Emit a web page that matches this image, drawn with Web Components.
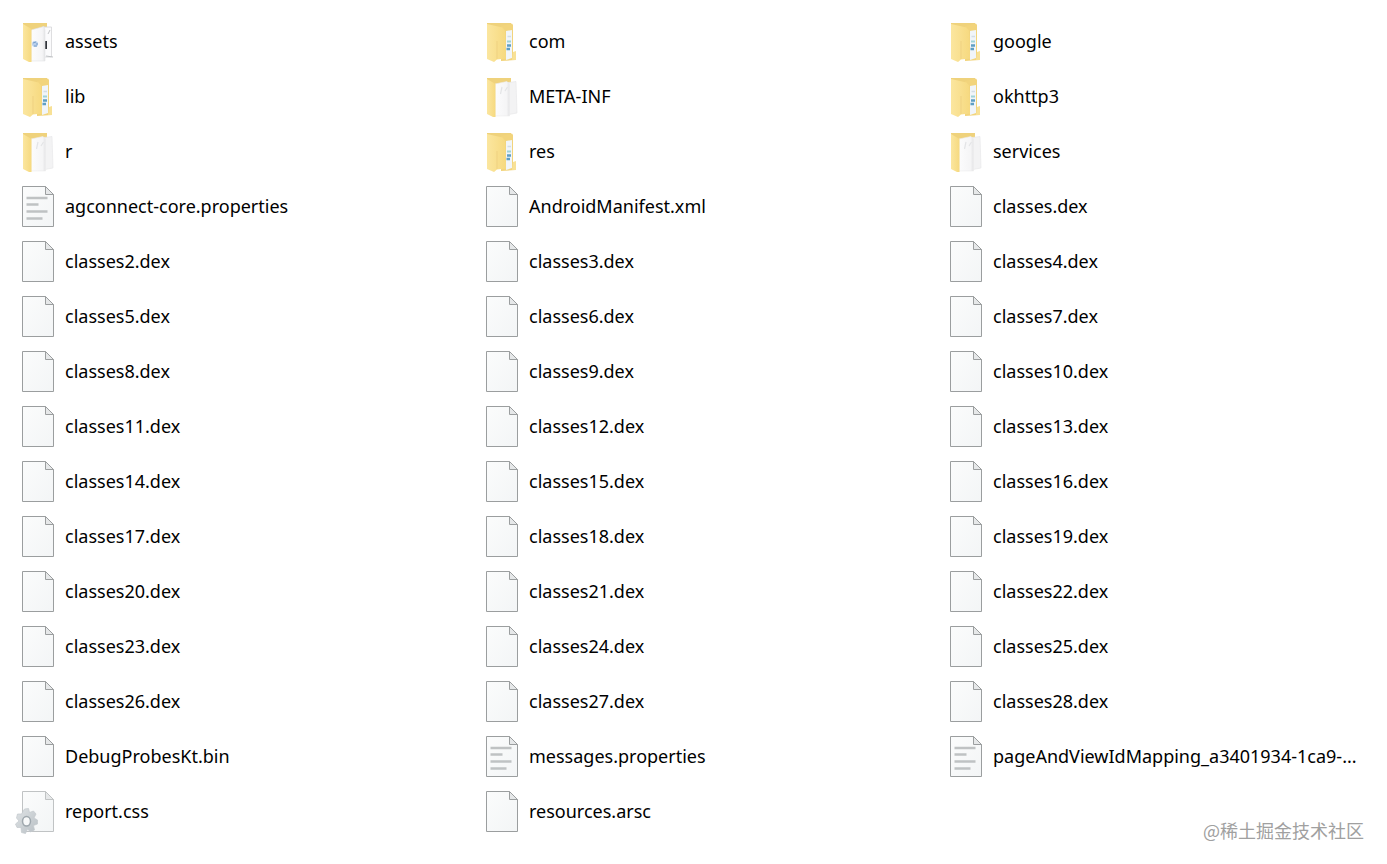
<!DOCTYPE html>
<html lang="en">
<head>
<meta charset="utf-8">
<title>Files</title>
<style>
body { margin: 0; background: #fff; color: #000; font-family: "Noto Sans", "Noto Sans CJK SC", sans-serif; }
</style>
</head>
<body>
<file-browser></file-browser>
<script>
const gradients = `
  <defs>
    <linearGradient id="p" x1="0" y1="0" x2="1" y2="1"><stop offset="0" stop-color="#fbfcfc"/><stop offset="1" stop-color="#f3f5f6"/></linearGradient>
    <linearGradient id="f" x1="0" y1="0" x2="1" y2="0"><stop offset="0" stop-color="#fbe69f"/><stop offset="1" stop-color="#f6d97f"/></linearGradient>
    <linearGradient id="w" x1="0" y1="0" x2="1" y2="0"><stop offset="0" stop-color="#fcfcfd"/><stop offset=".8" stop-color="#f5f5f6"/><stop offset="1" stop-color="#e4e4e6"/></linearGradient>
    <linearGradient id="g" x1="0" y1="0" x2="1" y2="1"><stop offset="0" stop-color="#dfe3e5"/><stop offset="1" stop-color="#b9c0c5"/></linearGradient>
  </defs>`;

const page = (stroke) => `
  <path d="M.5 .5H23.5L31.5 8.5V40.5H.5Z" fill="url(#p)" stroke="${stroke}"/>
  <path d="M23.5 .5V8.5H31.5Z" fill="#e6e8e9" stroke="${stroke}"/>`;

const folderBack = `
  <path d="M1 2H25V10H1Z" fill="#efd27c"/>`;

const folderCover = `
  <path d="M1 3L9.500 8V41L7 41L1 38Z" fill="url(#f)"/>`;

const ICONS = {
  file: page('#9b9e9f'),
  text: page('#9b9e9f') + `
  <path d="M4.500 12H25.500M4.500 18.500H16.500M4.500 25.500H25.500M4.500 32.500H20.500" stroke="#bfc2c3" stroke-width="2.600" fill="none"/>`,
  config: page('#c0c3c4') + `
  <g transform="translate(4.500 30)">
    <path fill-rule="evenodd" d="M-2 -12L2 -12.500L3 -8.500L7 -10L9.500 -7L7.500 -3L11 -1L11 3L7 4.500L8 9L4 11L1 8L-1 12.500L-5 11.500L-5.500 6.500L-9.500 6.500L-11 3L-7.500 0L-10 -3L-9 -7L-5 -7ZM0 -4.500A4 4.800 0 1 0 .1 -4.500Z" fill="url(#g)" stroke="#c3c9cd" stroke-width=".7"/>
    <ellipse cx="0" cy=".3" rx="4" ry="4.800" fill="none" stroke="#9fa8ae" stroke-width="1.500"/>
  </g>`,
  folder: folderBack + `
  <path d="M15 5L26 2.500L27 4V31H30V39L15 40Z" fill="#f2d47c"/>
  <path d="M20 10L26 9V37L20 39Z" fill="#f1f5f9"/>
  <path d="M21.500 15.500H25" stroke="#d3dde6" stroke-width="1.500"/>
  <path d="M21 20.500H25" stroke="#9fd3d8" stroke-width="2"/>
  <path d="M21 24.500H25M20.500 28H24" stroke="#5f9fc4" stroke-width="2.500"/>
  <path d="M27 31L30 30V39H26Z" fill="#f8e196"/>
  <path d="M10 6.500L19 9.500L20 37.500L10 38Z" fill="#f4d883"/>
  <path d="M1 3L16.500 6.500L19 9.500L20 37.500L11 38.500L8 41L1 38Z" fill="url(#f)"/>
  <path d="M11 20V38" stroke="#efd180" stroke-width="1"/>`,
  papers: folderBack + `
  <path d="M18 7L30 5.500L31 37L20 39Z" fill="#f3f3f4" stroke="#e6e6e7" stroke-width=".6"/>
  <path d="M9 8L21 5.500L23.500 8V40L9 40Z" fill="url(#w)" stroke="#ececed" stroke-width=".6"/>
  <path d="M21.500 11L19 15M16 11L14.500 18" stroke="#e3e4e6" stroke-width="1.200"/>` + folderCover,
  assets: folderBack + `
  <path d="M20 6H29.500V36H22Z" fill="#fbfbfc" stroke="#d5d6d8" stroke-width=".8"/>
  <path d="M28 9L26 13M24 35L31 36" stroke="#c2c4c6" stroke-width="1"/>
  <path d="M22 20H25V28H22Z" fill="#30343a"/>
  <path d="M9 9L22 5.500L23 9V40H9Z" fill="url(#w)" stroke="#e3e4e6" stroke-width=".6"/>
  <circle cx="13" cy="23" r="3" fill="#b9d0ec"/>
  <path d="M11 22L14 21M12 25H15M14 23H16" stroke="#789fcb" stroke-width="1"/>` + folderCover
};

class FileIcon extends HTMLElement {
  connectedCallback() {
    this.attachShadow({ mode: 'open' }).innerHTML = `
      <style>:host { display: block; flex: none; } svg { display: block; overflow: visible; }</style>
      <svg width="32" height="41" viewBox="0 0 32 41" aria-hidden="true">${gradients}${ICONS[this.getAttribute('kind')]}</svg>`;
  }
}

class FileItem extends HTMLElement {
  connectedCallback() {
    this.attachShadow({ mode: 'open' }).innerHTML = `
      <style>
        :host { display: flex; align-items: center; gap: 11px; height: 55px; min-width: 0; font-size: 18px; line-height: 24px; }
        span { white-space: nowrap; padding-bottom: 2px; }
      </style>
      <file-icon kind="${this.getAttribute('kind')}"></file-icon>
      <span><slot></slot></span>`;
  }
}

class WaterMark extends HTMLElement {
  connectedCallback() {
    this.attachShadow({ mode: 'open' }).innerHTML = `
      <style>
        :host { display: block; position: absolute; right: 23px; bottom: 22px; color: #a0a0a0; font: 18px/24px "Noto Sans CJK SC", sans-serif; white-space: nowrap; }
      </style>
      <slot></slot>`;
  }
}

const FILES = [
  ['assets', 'assets'], ['com', 'folder'], ['google', 'folder'],
  ['lib', 'folder'], ['META-INF', 'papers'], ['okhttp3', 'folder'],
  ['r', 'papers'], ['res', 'folder'], ['services', 'papers'],
  ['agconnect-core.properties', 'text'], ['AndroidManifest.xml', 'file'], ['classes.dex', 'file'],
  ...Array.from({ length: 27 }, (_, i) => [`classes${i + 2}.dex`, 'file']),
  ['DebugProbesKt.bin', 'file'], ['messages.properties', 'text'], ['pageAndViewIdMapping_a3401934-1ca9-...', 'text'],
  ['report.css', 'config'], ['resources.arsc', 'file']
];

class FileBrowser extends HTMLElement {
  connectedCallback() {
    this.attachShadow({ mode: 'open' }).innerHTML = `
      <style>
        :host { display: block; position: relative; padding: 14px 0 25px 22px; }
        ul { list-style: none; margin: 0; padding: 0; display: grid; grid-template-columns: repeat(3, minmax(0, 1fr)); column-gap: 27px; }
      </style>
      <ul>${FILES.map(([name, kind]) => `<li><file-item kind="${kind}">${name}</file-item></li>`).join('')}</ul>
      <water-mark>@稀土掘金技术社区</water-mark>`;
  }
}

customElements.define('file-icon', FileIcon);
customElements.define('file-item', FileItem);
customElements.define('water-mark', WaterMark);
customElements.define('file-browser', FileBrowser);
</script>
</body>
</html>
